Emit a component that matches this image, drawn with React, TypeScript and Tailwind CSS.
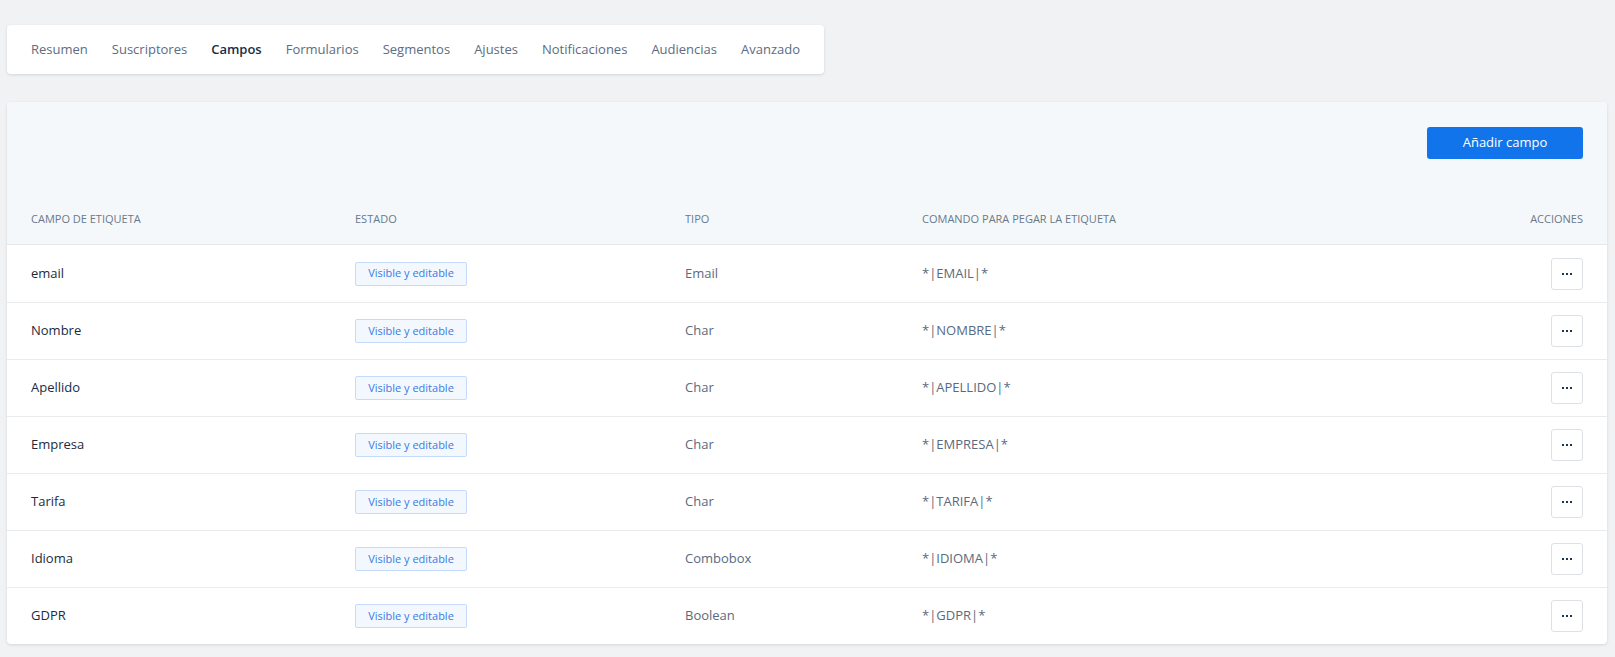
import React from "react";

const TABS = [
  "Resumen",
  "Suscriptores",
  "Campos",
  "Formularios",
  "Segmentos",
  "Ajustes",
  "Notificaciones",
  "Audiencias",
  "Avanzado",
];

interface Field {
  label: string;
  type: string;
  tag: string;
}

const FIELDS: Field[] = [
  { label: "email", type: "Email", tag: "*|EMAIL|*" },
  { label: "Nombre", type: "Char", tag: "*|NOMBRE|*" },
  { label: "Apellido", type: "Char", tag: "*|APELLIDO|*" },
  { label: "Empresa", type: "Char", tag: "*|EMPRESA|*" },
  { label: "Tarifa", type: "Char", tag: "*|TARIFA|*" },
  { label: "Idioma", type: "Combobox", tag: "*|IDIOMA|*" },
  { label: "GDPR", type: "Boolean", tag: "*|GDPR|*" },
];

const GRID = "grid grid-cols-[324px_330px_237px_1fr_auto] items-center";

export default function App() {
  return (
    <div
      className="min-h-screen bg-[#f1f2f4] pl-[7px] pr-[8px] pt-[25px] pb-4"
      style={{ fontFamily: '"Open Sans", "Noto Sans", sans-serif' }}
    >
      <nav className="w-[817px] bg-white rounded-[4px] shadow-[0_1px_3px_rgba(0,0,0,0.12)] h-[49px] flex items-center px-6 gap-6 text-[13px]">
        {TABS.map((tab) => (
          <span
            key={tab}
            className={
              tab === "Campos"
                ? "font-semibold text-[#1b2c45]"
                : "text-[#5d6c80]"
            }
          >
            {tab}
          </span>
        ))}
      </nav>

      <div className="mt-[28px] bg-white rounded-[4px] shadow-[0_1px_3px_rgba(0,0,0,0.12)] overflow-hidden">
        <div className="bg-[#f5f8fa] border-b border-[#e4e8ec] px-6 pt-[25px]">
          <div className="flex justify-end">
            <button className="w-[156px] h-8 rounded-[3px] bg-[#1274ea] text-white text-[13px]">
              Añadir campo
            </button>
          </div>
          <div
            className={`${GRID} h-[50px] mt-[35px] text-[11px] uppercase text-[#6a788b]`}
          >
            <span>Campo de etiqueta</span>
            <span>Estado</span>
            <span>Tipo</span>
            <span>Comando para pegar la etiqueta</span>
            <span className="text-right">Acciones</span>
          </div>
        </div>

        {FIELDS.map((f, i) => (
          <div
            key={f.label}
            className={`${GRID} h-[57px] px-6 text-[13px] ${
              i > 0 ? "border-t border-[#e9ecef]" : ""
            }`}
          >
            <span className="text-[#1c2b40]">{f.label}</span>
            <span>
              <span className="inline-flex items-center justify-center w-[112px] h-6 rounded-[2px] border border-[#c5dbfb] bg-[#f3f8ff] text-[11px] text-[#3a7be0]">
                Visible y editable
              </span>
            </span>
            <span className="text-[#5a6a7e]">{f.type}</span>
            <span className="text-[#5a6a7e]">{f.tag}</span>
            <button className="w-8 h-8 rounded-[3px] border border-[#dde1e6] bg-white flex items-center justify-center">
              <svg width="12" height="4" viewBox="0 0 12 4">
                <rect x="1" y="1" width="2" height="2" fill="#1f3352" />
                <rect x="5" y="1" width="2" height="2" fill="#1f3352" />
                <rect x="9" y="1" width="2" height="2" fill="#1f3352" />
              </svg>
            </button>
          </div>
        ))}
      </div>
    </div>
  );
}
